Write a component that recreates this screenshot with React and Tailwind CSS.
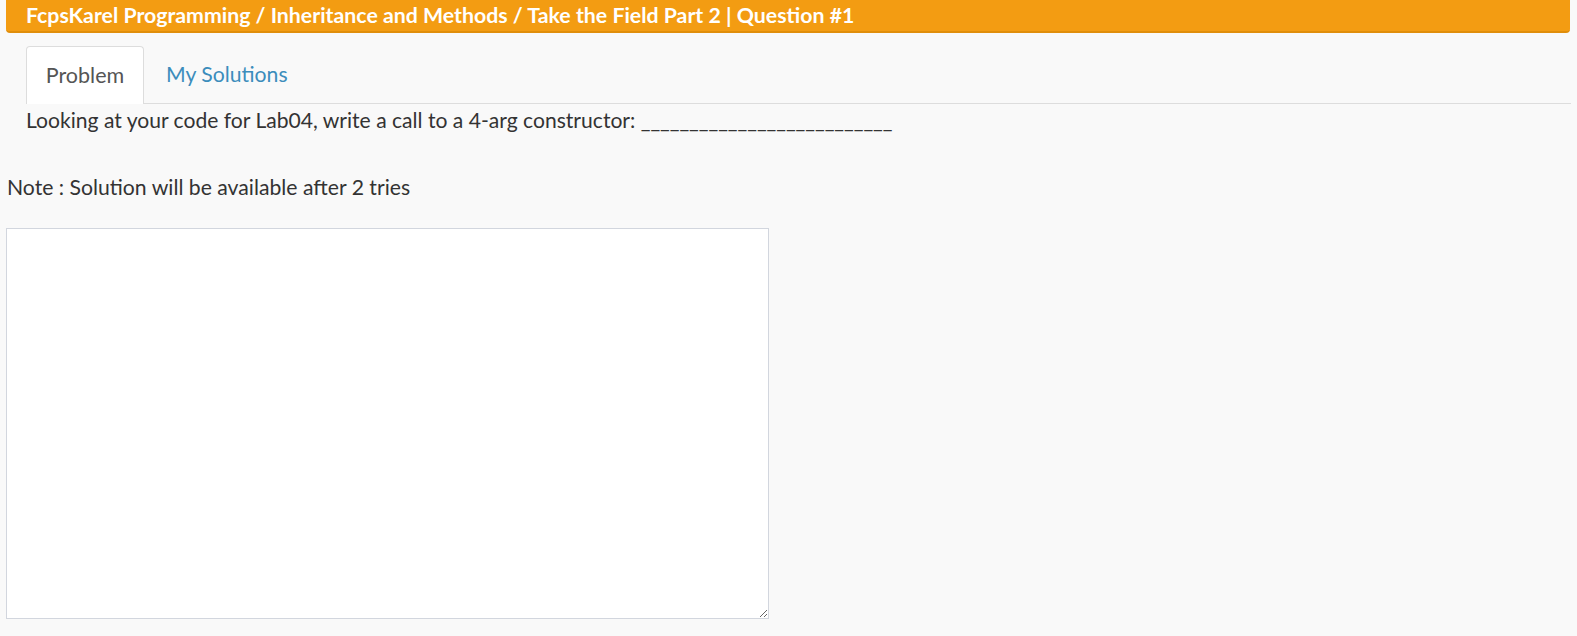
export default function App() {
  return (
    <div className="min-h-[636px] bg-[#f9f9f9] text-[#333]" style={{ fontFamily: "Lato, 'Liberation Sans', sans-serif" }}>
      <div className="pl-[6px] pr-[7px]">
        <div className="h-[33px] bg-[#f39c12] border-b-2 border-[#e08e0b] rounded-b-[4px] pl-[20px] flex items-center">
          <span className="text-white font-bold text-[21.3px] leading-none">
            FcpsKarel Programming / Inheritance and Methods / Take the Field Part 2 | Question #1
          </span>
        </div>
      </div>
      <div className="pl-[26px] pr-[6px] mt-[13px]">
        <div className="flex border-b border-[#ddd] h-[58px]">
          <div className="bg-white border border-[#ddd] border-b-0 rounded-t-[4px] w-[118px] -mb-px flex items-center justify-center text-[21.5px] text-[#555]">
            Problem
          </div>
          <div className="px-[22px] flex items-center text-[21.2px] text-[#3c8dbc]">My Solutions</div>
        </div>
        <div className="text-[21.1px] leading-[30px] mt-[1px]">
          Looking at your code for Lab04, write a call to a 4-arg constructor: __________________________
        </div>
      </div>
      <div className="pl-[7px] mt-[37px] text-[21.2px] leading-[30px]">Note : Solution will be available after 2 tries</div>
      <div className="pl-[6px] mt-[26px]">
        <textarea className="block w-[763px] h-[391px] bg-white border border-[#d2d6de] outline-none resize" />
      </div>
    </div>
  );
}
